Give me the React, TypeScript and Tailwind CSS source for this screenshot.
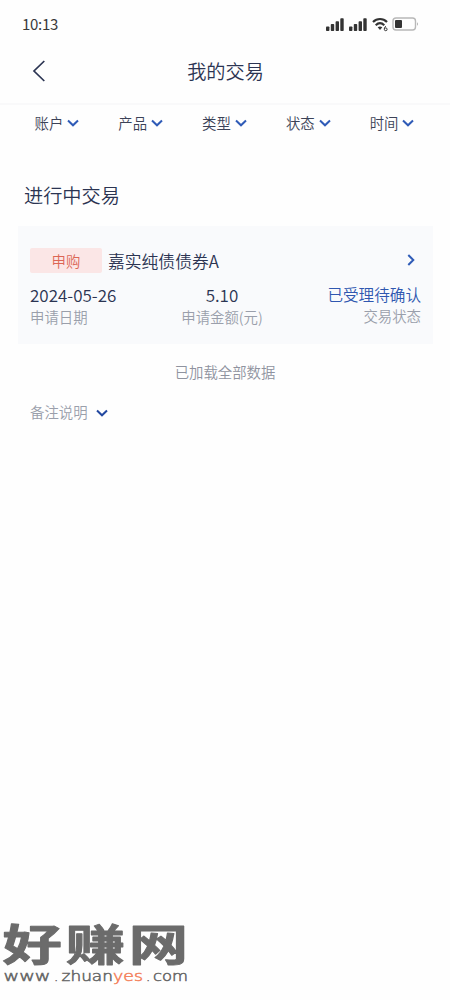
interface Column {
  value: string;
  label: string;
}

const FILTERS = ["账户", "产品", "类型", "状态", "时间"];

const DATE: Column = { value: "2024-05-26", label: "申请日期" };
const AMOUNT: Column = { value: "5.10", label: "申请金额(元)" };
const STATUS: Column = { value: "已受理待确认", label: "交易状态" };

function ChevronDown({ className }: { className?: string }) {
  return (
    <svg width="12" height="8" viewBox="0 0 12 8" fill="none" className={className}>
      <path d="M1 1.5 6 6.3 11 1.5" stroke="currentColor" strokeWidth="2" />
    </svg>
  );
}

function Signal() {
  return (
    <svg width="18" height="13" viewBox="0 0 18 13" fill="#333">
      <rect x="0" y="8.5" width="3.4" height="4.5" rx="0.8" />
      <rect x="4.8" y="6" width="3.4" height="7" rx="0.8" />
      <rect x="9.6" y="3.2" width="3.4" height="9.8" rx="0.8" />
      <rect x="14.3" y="0.3" width="3.4" height="12.7" rx="0.8" />
    </svg>
  );
}

function StatusBar() {
  return (
    <div className="flex h-12 items-center justify-between pl-[22px] pr-[30px]">
      <span className="mb-px text-[15px] font-normal leading-none tracking-[-0.3px] text-[#3a3a3a]">
        10:13
      </span>
      <div className="flex items-center">
        <Signal />
        <span className="w-[5.5px]" />
        <Signal />
        <svg width="17" height="15" viewBox="0 0 17 15" fill="none" className="ml-[5px]">
          <path d="M1 5C5 1 11 1 15 5" stroke="#333" strokeWidth="2.2" />
          <path d="M3.7 8.2c2.6-2.4 6-2.4 8.6 0" stroke="#333" strokeWidth="2.2" />
          <path d="M5.7 10.3c1.4-1 3.2-1 4.6 0L8 13z" fill="#333" />
          <path d="M14 9c-1.2 1-1.7 2-1.7 2.9" stroke="#333" strokeWidth="1" />
          <circle cx="13.7" cy="12.3" r="1.4" stroke="#333" strokeWidth="1" />
        </svg>
        <svg width="28" height="14" viewBox="0 0 28 14" fill="none" className="ml-[3px]">
          <rect x="1" y="1" width="22.5" height="12" rx="3" stroke="#b8b8b8" strokeWidth="1.4" />
          <rect x="3" y="3" width="7" height="8" rx="1" fill="#333" />
          <path d="M25 5.2c1.4.6 1.4 3 0 3.6z" fill="#b8b8b8" />
        </svg>
      </div>
    </div>
  );
}

function Watermark() {
  return (
    <svg
      width="192"
      height="80"
      viewBox="0 0 192 80"
      className="block overflow-visible"
      fontFamily="'Liberation Sans', 'Noto Sans CJK SC', sans-serif"
    >
      <g
        transform="scale(1.25 0.92)"
        fill="#6b6b6b"
        stroke="#6b6b6b"
        strokeWidth="1"
        strokeLinejoin="round"
        fontSize="47.5"
        fontWeight="700"
      >
        <text x="2" y="44.8">好</text>
        <text x="52.6" y="44.8">赚</text>
        <text x="103" y="44.8">网</text>
      </g>
      <g
        fontFamily="'DejaVu Sans', sans-serif"
        fontSize="13.5"
        fill="#686868"
        stroke="#686868"
        strokeWidth="0.5"
      >
        <text x="3.5" y="61" textLength="47" lengthAdjust="spacingAndGlyphs">www</text>
        <text x="54" y="61">.</text>
        <text x="61.5" y="61" textLength="51.5" lengthAdjust="spacingAndGlyphs">zhuan</text>
        <text x="113" y="61" fill="#f4845f" stroke="#f4845f" textLength="30" lengthAdjust="spacingAndGlyphs">yes</text>
        <text x="146" y="61">.</text>
        <text x="153" y="61" textLength="35" lengthAdjust="spacingAndGlyphs">com</text>
      </g>
    </svg>
  );
}

export default function App() {
  return (
    <div className="flex h-[1000px] w-[450px] flex-col overflow-hidden bg-[#fefefe] font-['Noto_Sans_CJK_SC',sans-serif] font-[350] text-[#2b3452]">
      <StatusBar />

      <header className="grid h-[57px] grid-cols-[60px_1fr_60px] items-center border-b-2 border-[#f9f9fa] pb-2.5">
        <svg width="14" height="22" viewBox="0 0 14 22" fill="none" className="ml-8">
          <path d="M12.3 1 2 11l10.3 10" stroke="#2b3452" strokeWidth="1.7" />
        </svg>
        <h1 className="pl-px text-center text-[19.2px] leading-6">我的交易</h1>
      </header>

      <nav className="flex h-[37px] pb-0.5 pl-[15px] pr-4">
        {FILTERS.map((name) => (
          <button
            key={name}
            className="flex flex-1 items-center justify-center gap-[4px] text-[14.4px] text-[#3b4257]"
          >
            {name}
            <ChevronDown className="text-[#2f5bb7]" />
          </button>
        ))}
      </nav>

      <h2 className="mt-10 pl-6 text-[19.2px] leading-[26px]">进行中交易</h2>

      <section className="ml-[18px] mr-[17px] mt-[18px] h-[118px] bg-[#f9fafc] px-3 pt-[22px]">
        <div className="flex h-[25px] items-center">
          <span className="flex h-[25px] w-[72px] items-center justify-center rounded-xs bg-[#fbe6e6] text-[14.4px] text-[#dc6655]">
            申购
          </span>
          <span className="ml-1.5 text-[16.8px] leading-6">嘉实纯债债券A</span>
          <svg width="8" height="12" viewBox="0 0 8 12" fill="none" className="mb-0.5 ml-auto mr-[6px]">
            <path d="m1.3 1 5 5-5 5" stroke="#2f5bb7" strokeWidth="2" />
          </svg>
        </div>
        <div className="mt-2.5 flex text-[14.4px] leading-5 text-[#9a9fab]">
          <div className="w-[110px]">
            <p className="text-[17px] leading-6 text-[#2b3452]">{DATE.value}</p>
            <p>{DATE.label}</p>
          </div>
          <div className="w-[164px] text-center">
            <p className="text-[17px] leading-6 text-[#2b3452]">{AMOUNT.value}</p>
            <p>{AMOUNT.label}</p>
          </div>
          <div className="flex-1 text-right">
            <p className="text-[15.6px] leading-[23px] text-[#2f57b0]">{STATUS.value}</p>
            <p>{STATUS.label}</p>
          </div>
        </div>
      </section>

      <p className="mt-[18px] text-center text-[14.4px] leading-5 text-[#8f939f]">已加载全部数据</p>

      <div className="mt-5 flex items-center gap-[8px] pl-[30px] text-[14.4px] leading-5 text-[#9a9fab]">
        备注说明
        <ChevronDown className="mt-0.5 text-[#2348a0]" />
      </div>

      <footer className="mt-auto h-20">
        <Watermark />
      </footer>
    </div>
  );
}
